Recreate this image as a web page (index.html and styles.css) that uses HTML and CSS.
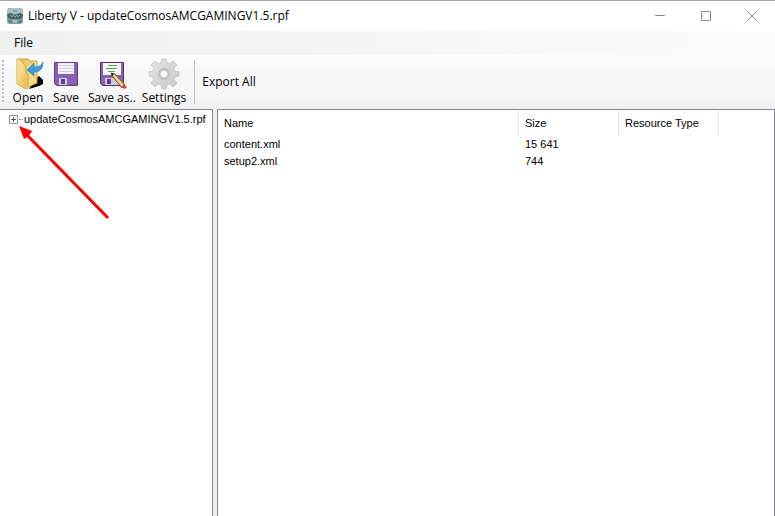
FILE: index.html
```html
<!DOCTYPE html>
<html lang="en">
<head>
    <meta charset="UTF-8">
    <title>Liberty V - updateCosmosAMCGAMINGV1.5.rpf</title>
    <link rel="stylesheet" href="styles.css">
</head>
<body>
<header class="titlebar">
    <svg class="titlebar__icon" viewBox="0 0 16 16">
        <rect width="16" height="16" rx="3" fill="#7fa0a2"/>
        <path d="M2 0h12l2 3v3H0V3z" fill="#a3c2c0"/>
        <path d="M0 6l4-1 4 2 4-2 4 1-1 4-3 1H4L1 10z" fill="#4a6065"/>
        <path d="M3 7l2 2 1-2 2 2 2-2 1 2 2-2" fill="none" stroke="#8aa5a6"/>
        <path d="M1 12h4l1 3H2zM11 12h4l-1 3h-4z" fill="#5f8587"/>
        <path d="M5 12h6l-1 3H6z" fill="#a2bcba"/>
        <path d="M6 2h4v2H6z" fill="#7fa5a5"/>
    </svg>
    <h1 class="titlebar__text">Liberty V - updateCosmosAMCGAMINGV1.5.rpf</h1>
    <button class="titlebar__button" aria-label="Minimize">
        <svg viewBox="0 0 10 10"><path d="M0 4.5h10"/></svg>
    </button>
    <button class="titlebar__button" aria-label="Maximize">
        <svg viewBox="0 0 10 10"><path d="M.5 .5h9v9h-9z"/></svg>
    </button>
    <button class="titlebar__button" aria-label="Close">
        <svg viewBox="0 0 10 10"><path d="M0 0l10 10M10 0L0 10"/></svg>
    </button>
</header>

<nav class="menu">
    <button class="menu__item">File</button>
</nav>

<div class="toolbar">
    <span class="toolbar__grip"></span>
    <button class="tool">
        <svg class="tool__icon" viewBox="0 0 32 32">
            <defs>
                <linearGradient id="folder" x1="0" x2="1" y2="1">
                    <stop offset="0" stop-color="#fbe594"/>
                    <stop offset="1" stop-color="#dfae42"/>
                </linearGradient>
                <linearGradient id="flap" x2="1">
                    <stop offset="0" stop-color="#fdf0b6"/>
                    <stop offset="1" stop-color="#eac25c"/>
                </linearGradient>
            </defs>
            <path d="M23 21l4-3 4 4v4l-4 2-10 3z" fill="#000"/>
            <path d="M6 1h10l2 2h7v22l-9 4z" fill="#efcb6c" stroke="#cfa23e"/>
            <path d="M15 9l9-6v21l-8 5z" fill="#f6d980"/>
            <path d="M5 1l4 1 5 7v5l2 2v14l-2 1-9-5z" fill="url(#flap)" stroke="#d2a748"/>
            <path d="M5 1v25l9 5V20l-5-4V6z" fill="url(#folder)" opacity=".6"/>
            <path d="M15 12l7-7v4c4 0 7-1 9-5 0 7-3 10-9 10v4z" fill="#3a9edb" stroke="#2679b5" stroke-width=".6"/>
        </svg>
        <span>Open</span>
    </button>
    <button class="tool">
        <svg class="tool__icon" viewBox="0 0 32 32">
            <path d="M4.500 4.500h23v23h-21l-2-2z" fill="#8660b4" stroke="#5d4187"/>
            <path d="M8 5h16v11H8z" fill="#f4f1f7"/>
            <path d="M9 7.500h14M9 10.500h14M9 13.500h14" stroke="#d0cad8"/>
            <path d="M9 20h14v7H9z" fill="#d3ccdc"/>
            <path d="M11 21h4v5h-4z" fill="#58417e"/>
            <path d="M17 20h7v7h-7z" fill="#8660b4"/>
        </svg>
        <span>Save</span>
    </button>
    <button class="tool">
        <svg class="tool__icon" viewBox="0 0 32 32">
            <path d="M4.500 4.500h23v23h-21l-2-2z" fill="#8660b4" stroke="#4b3370"/>
            <path d="M7 5h18v12H7z" fill="#f8f7fa"/>
            <path d="M12 7.500h9M10 10.500h11M12 13.500h7" stroke="#48aa4c"/>
            <path d="M9 20h14v7H9z" fill="#d3ccdc"/>
            <path d="M11 21h4v5h-4z" fill="#58417e"/>
            <path d="M15 15l4 1 10 11-3 3-9-11z" fill="#efcc80" stroke="#655039"/>
            <path d="M15 15l3 1-2 2z" fill="#222"/>
            <path d="M25 29l3-3 3 3-2 2z" fill="#d44b3c"/>
        </svg>
        <span>Save as..</span>
    </button>
    <button class="tool">
        <svg class="tool__icon" viewBox="0 0 32 32">
            <defs>
                <linearGradient id="gear" x2="1" y2="1">
                    <stop offset="0" stop-color="#e6e6e6"/>
                    <stop offset="1" stop-color="#c6c6c6"/>
                </linearGradient>
            </defs>
            <path fill-rule="evenodd" fill="url(#gear)" stroke="#c2c2c2" stroke-width=".8" stroke-linejoin="round" d="M13 5l1-4h4l1 4 3 1 3-3 4 4-3 3 1 3 4 1v4l-4 1-1 3 3 3-4 4-3-3-3 1-1 4h-4l-1-4-3-1-3 3-4-4 3-3-1-3-4-1v-4l4-1 1-3-3-3 4-4 3 3zM16 12a4 4 0 1 0 0 8 4 4 0 0 0 0-8z"/>
            <circle cx="16" cy="16" r="5" fill="none" stroke="#bdbdbd" stroke-width="2"/>
        </svg>
        <span>Settings</span>
    </button>
    <span class="toolbar__separator"></span>
    <button class="tool tool--text">Export All</button>
</div>

<main class="panels">
    <section class="tree">
        <div class="tree__node">
            <button class="tree__toggle" aria-label="Expand">
                <svg viewBox="0 0 9 9">
                    <path d="M.5 .5h8v8h-8z" fill="#fff" stroke="#919191"/>
                    <path d="M2 4.5h5M4.5 2v5" stroke="#3f5280"/>
                </svg>
            </button>
            <span class="tree__line"></span>
            <span>updateCosmosAMCGAMINGV1.5.rpf</span>
        </div>
        <svg class="tree__arrow" viewBox="0 0 92 94">
            <path d="M8 9L89 92" stroke="#fe0000" stroke-width="3"/>
            <path d="M0 0l13 5-1 2-5 5-2 1z" fill="#fe0000"/>
        </svg>
    </section>
    <section class="files">
        <table class="files__table">
            <thead>
                <tr>
                    <th class="files__name">Name</th>
                    <th class="files__size">Size</th>
                    <th class="files__type">Resource Type</th>
                    <th class="files__rest"></th>
                </tr>
            </thead>
            <tbody>
                <tr><td>content.xml</td><td>15 641</td><td></td><td></td></tr>
                <tr><td>setup2.xml</td><td>744</td><td></td><td></td></tr>
            </tbody>
        </table>
    </section>
</main>
</body>
</html>
```
FILE: styles.css
```css
* {
  box-sizing: border-box;
}

body {
  display: flex;
  flex-direction: column;
  height: 100vh;
  margin: 0;
  overflow: hidden;
  color: #000;
  background: #f0f0f0;
  font: 12px/16px "Open Sans", "Noto Sans", sans-serif;
}

button {
  padding: 0;
  border: 0;
  color: inherit;
  background: none;
  font: inherit;
}

svg {
  display: block;
}

/* title bar */
.titlebar {
  display: flex;
  align-items: center;
  height: 31px;
  padding-left: 7px;
  border-top: 1px solid #a5a5a5;
  background: #fff;
}

.titlebar__icon {
  width: 16px;
  height: 16px;
  margin-right: 5px;
}

.titlebar__text {
  flex: 1;
  margin: 0;
  font-size: 12px;
  font-weight: normal;
}

.titlebar__button {
  display: flex;
  justify-content: center;
  align-items: center;
  width: 46px;
  height: 30px;
}

.titlebar__button svg {
  width: 10px;
  height: 10px;
  overflow: visible;
  fill: none;
  stroke: #8c8c8c;
}

/* menu */
.menu {
  display: flex;
  height: 24px;
  padding-left: 14px;
  background: linear-gradient(90deg, #f0f0f0, #fcfcfc);
}

/* toolbar */
.toolbar {
  display: flex;
  align-items: center;
  height: 54px;
  background: linear-gradient(#fdfdfd, #f7f7f7 30%, #f7f7f7 75%, #efefef);
}

.toolbar__grip {
  width: 2px;
  height: 44px;
  margin: 0 8px 0 2px;
  background: repeating-linear-gradient(#bdbdbd 0 2px, transparent 2px 4px);
}

.tool {
  display: flex;
  flex-direction: column;
  align-items: center;
  height: 48px;
  margin-right: 6px;
}

.tool__icon {
  width: 32px;
  height: 32px;
}

.toolbar__separator {
  width: 1px;
  height: 44px;
  margin: 0 7px 0 2px;
  background: #bdbdbd;
}

.tool--text {
  justify-content: center;
}

/* panels */
.panels {
  display: flex;
  flex: 1;
  gap: 4px;
  min-height: 0;
  font: 11px/17px "Liberation Sans", Arial, sans-serif;
}

.tree,
.files {
  border: 1px solid #828790;
  border-bottom: 0;
  background: #fff;
}

.tree {
  position: relative;
  flex: 0 0 213px;
  border-left: 0;
}

.tree__node {
  display: flex;
  align-items: center;
  height: 18px;
  padding-left: 9px;
}

.tree__toggle,
.tree__toggle svg {
  width: 9px;
  height: 9px;
}

.tree__line {
  width: 4px;
  margin: 0 1px;
  border-top: 1px dotted #808080;
}

.tree__arrow {
  position: absolute;
  top: 16px;
  left: 19px;
  width: 92px;
  height: 94px;
}

.files {
  flex: 1;
}

.files__table {
  width: 100%;
  table-layout: fixed;
  border-collapse: separate;
  border-spacing: 0;
}

.files__table th,
.files__table td {
  padding: 0 6px;
  text-align: left;
  font-weight: normal;
  white-space: nowrap;
}

.files__table th {
  height: 26px;
  border-right: 1px solid #e5e5e5;
}

.files__table .files__rest {
  border-right: 0;
}

.files__name {
  width: 301px;
}

.files__size,
.files__type {
  width: 100px;
}
```
